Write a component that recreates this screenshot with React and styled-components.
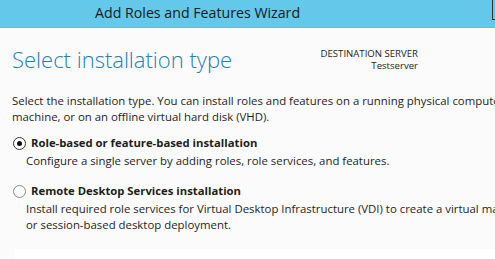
import React from "react";
import styled, { createGlobalStyle } from "styled-components";

const Global = createGlobalStyle`
  html, body { margin: 0; padding: 0; background: #fbfbfb; }
  body { width: 495px; height: 259px; overflow: hidden; font-family: "Open Sans", "Noto Sans", sans-serif; color: #1e1e1e; }
`;

const Window = styled.div`
  width: 495px;
  height: 259px;
  display: flex;
  flex-direction: column;
  overflow: hidden;
  background: #fbfbfb;
`;

const TitleBar = styled.div`
  position: relative;
  height: 28px;
  flex: none;
  background: #63c8e9;
  border-bottom: 1px solid #80b3cc;
  box-sizing: border-box;
  display: flex;
  align-items: center;
  padding-left: 95px;
`;

const TitleText = styled.div`
  font-size: 14.2px;
  color: #1a1a1a;
  white-space: nowrap;
  padding-bottom: 2px;
`;

const CloseEdge = styled.div`
  position: absolute;
  left: 492px;
  top: 0;
  width: 10px;
  height: 19px;
  border-left: 1px solid #333;
  border-bottom: 1px solid #333;
`;

const Body = styled.div`
  flex: 1;
  padding: 0 0 0 12px;
  display: flex;
  flex-direction: column;
`;

const Header = styled.div`
  display: flex;
  align-items: flex-start;
  height: 65px;
  flex: none;
`;

const Heading = styled.h1`
  margin: 16px 0 0 0;
  font-weight: 300;
  font-size: 22px;
  color: #2080b8;
  white-space: nowrap;
  width: 300px;
`;

const Dest = styled.div`
  margin-top: 20px;
  width: 106px;
  text-align: right;
  font-size: 9.6px;
  line-height: 12px;
  white-space: nowrap;
`;

const Para = styled.p`
  margin: 0;
  font-size: 11.4px;
  line-height: 16px;
  white-space: nowrap;
`;

const Option = styled.div`
  display: flex;
  flex-direction: column;
  margin-top: ${(p) => p.$top}px;
`;

const OptionLabel = styled.div`
  display: flex;
  align-items: center;
  gap: 5px;
  font-weight: 700;
  font-size: 11.3px;
  line-height: 16px;
  white-space: nowrap;
`;

const Radio = styled.span`
  width: 11px;
  height: 11px;
  border-radius: 50%;
  border: 1px solid ${(p) => (p.$checked ? "#333" : "#888")};
  background: #fff;
  display: flex;
  align-items: center;
  justify-content: center;
  flex: none;
  margin-left: 1px;
  &::after {
    content: "";
    width: 5px;
    height: 5px;
    border-radius: 50%;
    background: #111;
    display: ${(p) => (p.$checked ? "block" : "none")};
  }
`;

const Desc = styled.p`
  margin: 2px 0 0 14px;
  font-size: 11.4px;
  line-height: 16px;
  white-space: nowrap;
`;

const Footer = styled.div`
  margin: auto 0 0 15px;
  height: 10px;
  flex: none;
  background: #ffffff;
`;

export default function App() {
  return (
    <Window>
      <Global />
      <TitleBar>
        <TitleText>Add Roles and Features Wizard</TitleText>
        <CloseEdge />
      </TitleBar>
      <Body>
        <Header>
          <Heading>Select installation type</Heading>
          <Dest>
            DESTINATION SERVER
            <br />
            Testserver
          </Dest>
        </Header>
        <Para>
          Select the installation type. You can install roles and features on a running physical computer or virtual
          <br />
          machine, or on an offline virtual hard disk (VHD).
        </Para>
        <Option $top={10}>
          <OptionLabel>
            <Radio $checked />
            Role-based or feature-based installation
          </OptionLabel>
          <Desc>Configure a single server by adding roles, role services, and features.</Desc>
        </Option>
        <Option $top={14}>
          <OptionLabel>
            <Radio />
            Remote Desktop Services installation
          </OptionLabel>
          <Desc>
            Install required role services for Virtual Desktop Infrastructure (VDI) to create a virtual machine-based
            <br />
            or session-based desktop deployment.
          </Desc>
        </Option>
      </Body>
      <Footer />
    </Window>
  );
}
